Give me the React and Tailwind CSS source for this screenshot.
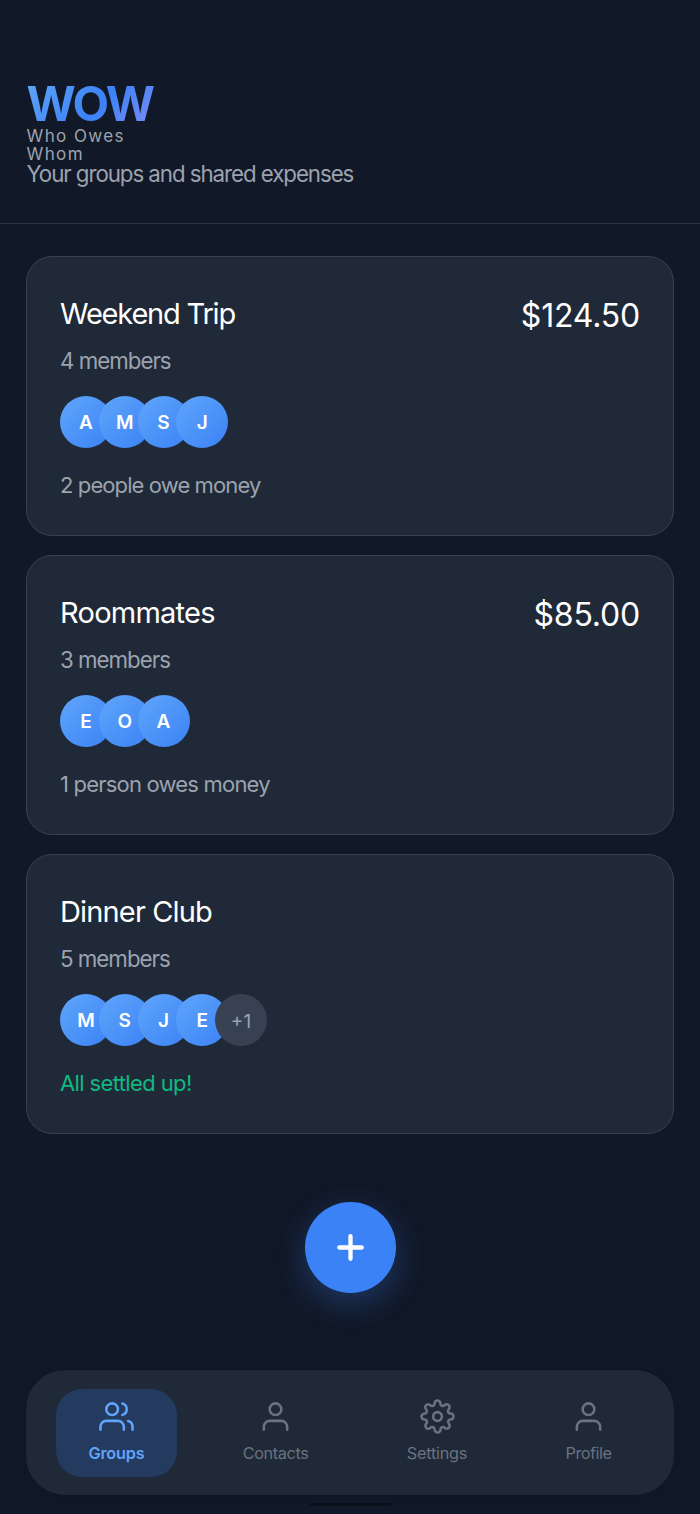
import React from "react";

const groups = [
  { name: "Weekend Trip", nameClass: "tracking-[-1.2px]", amount: "$124.50", members: "4 members", people: ["A", "M", "S", "J"], extra: null, status: "2 people owe money", statusClass: "tracking-[-0.9px] text-[#9ca3af]" },
  { name: "Roommates", nameClass: "tracking-[-0.75px]", amount: "$85.00", members: "3 members", people: ["E", "O", "A"], extra: null, status: "1 person owes money", statusClass: "tracking-[-0.8px] text-[#9ca3af]" },
  { name: "Dinner Club", nameClass: "tracking-[-0.85px]", amount: null, members: "5 members", people: ["M", "S", "J", "E"], extra: "+1", status: "All settled up!", statusClass: "tracking-[-0.62px] text-[#10b981]" },
];

function Icon({ children }) {
  return (
    <svg className="size-[35px] shrink-0" viewBox="0 0 24 24" fill="none" stroke="currentColor" strokeWidth="1.75" strokeLinecap="round" strokeLinejoin="round">
      {children}
    </svg>
  );
}

function UsersIcon() {
  return (
    <Icon>
      <path d="M17 21v-2a4 4 0 0 0-4-4H5a4 4 0 0 0-4 4v2" />
      <circle cx="9" cy="7" r="4" />
      <path d="M23 21v-2a4 4 0 0 0-3-3.87" />
      <path d="M16 3.13a4 4 0 0 1 0 7.75" />
    </Icon>
  );
}

function UserIcon() {
  return (
    <Icon>
      <path d="M20 21v-2a4 4 0 0 0-4-4H8a4 4 0 0 0-4 4v2" />
      <circle cx="12" cy="7" r="4" />
    </Icon>
  );
}

function SettingsIcon() {
  return (
    <Icon>
      <circle cx="12" cy="12" r="3" />
      <path d="M19.4 15a1.65 1.65 0 0 0 .33 1.82l.06.06a2 2 0 0 1-2.83 2.83l-.06-.06a1.65 1.65 0 0 0-1.82-.33 1.65 1.65 0 0 0-1 1.51V21a2 2 0 0 1-4 0v-.09A1.65 1.65 0 0 0 9 19.4a1.65 1.65 0 0 0-1.82.33l-.06.06a2 2 0 0 1-2.83-2.83l.06-.06a1.65 1.65 0 0 0 .33-1.82 1.65 1.65 0 0 0-1.51-1H3a2 2 0 0 1 0-4h.09A1.65 1.65 0 0 0 4.6 9a1.65 1.65 0 0 0-.33-1.82l-.06-.06a2 2 0 0 1 2.83-2.83l.06.06a1.65 1.65 0 0 0 1.82.33H9a1.65 1.65 0 0 0 1-1.51V3a2 2 0 0 1 4 0v.09a1.65 1.65 0 0 0 1 1.51 1.65 1.65 0 0 0 1.82-.33l.06-.06a2 2 0 0 1 2.83 2.83l-.06.06a1.65 1.65 0 0 0-.33 1.82V9a1.65 1.65 0 0 0 1.51 1H21a2 2 0 0 1 0 4h-.09a1.65 1.65 0 0 0-1.51 1z" />
    </Icon>
  );
}

function GroupCard({ group }) {
  return (
    <article className="flex h-[280px] flex-col rounded-[26px] border border-[#374151] bg-[#1f2937] px-[33px] pt-[39px]">
      <div className="flex h-9 items-center justify-between text-white">
        <h2 className={"text-[29px] leading-9 " + group.nameClass}>{group.name}</h2>
        {group.amount && <span className="pt-1 text-[32px] leading-9 tracking-[-0.2px]">{group.amount}</span>}
      </div>
      <p className="mt-[15px] text-[22.3px] leading-7 tracking-[-1px] text-[#9ca3af]">{group.members}</p>
      <div className="mt-[21px] flex">
        {group.people.map((p, i) => (
          <div key={i} className="-mr-[13.25px] flex size-[52px] shrink-0 items-center justify-center rounded-full bg-linear-135 from-[#60a5fa] to-[#3b82f6] pt-0.5 text-[19px] font-semibold text-white">
            {p}
          </div>
        ))}
        {group.extra && (
          <div className="flex size-[52px] items-center justify-center rounded-full bg-[#374151] pt-1 text-[19px] text-[#9ca3af]">{group.extra}</div>
        )}
      </div>
      <p className={"mt-[23px] text-[22px] leading-7 " + group.statusClass}>{group.status}</p>
    </article>
  );
}

export default function App() {
  return (
    <div className="flex h-[1514px] w-[700px] flex-col bg-[#111827] font-['Inter',sans-serif]">
      <header className="flex h-[224px] flex-col border-b-[1.5px] border-[#2a3443] px-[26.5px] pt-20">
        <h1 className="w-[130px] bg-[linear-gradient(135deg,#60a5fa_0%,#3b82f6_55%,#818cf8_100%)] bg-clip-text text-[47.5px] leading-[48px] font-bold tracking-[-2.2px] text-transparent">WOW</h1>
        <p className="w-[127px] text-[17px] leading-[17.5px] tracking-[1.4px] text-[#9ca3af]">Who Owes Whom</p>
        <p className="-mt-[3.5px] text-[22.3px] leading-7 tracking-[-1.06px] text-[#9ca3af]">Your groups and shared expenses</p>
      </header>
      <main className="flex flex-col gap-[19px] px-[26px] pt-8">
        {groups.map((g) => <GroupCard key={g.name} group={g} />)}
      </main>
      <div className="mt-[68px] flex justify-center">
        <button aria-label="Add" className="flex size-[91px] items-center justify-center rounded-full bg-[#3b82f6] text-white shadow-[0_10px_32px_rgba(59,130,246,0.3)]">
          <svg className="size-[45px]" viewBox="0 0 24 24" fill="none" stroke="currentColor" strokeWidth="2.3" strokeLinecap="round">
            <path d="M12 6v12M6 12h12" />
          </svg>
        </button>
      </div>
      <nav className="mx-[26px] mt-[77px] flex h-[125px] shrink-0 items-center justify-between rounded-[39px] bg-[#1f2937] px-[30px] text-[16.3px] leading-5 text-[#6b7280] shadow-[0_0_10px_rgba(0,0,0,0.12)]">
        <a className="flex h-[88px] w-[121px] flex-col items-center rounded-[26px] bg-[#243a5e] pt-[10.5px] font-semibold tracking-[-0.2px] text-[#60a5fa]">
          <UsersIcon /><span className="mt-[9px]">Groups</span>
        </a>
        <a className="flex h-[88px] w-[131px] flex-col items-center pt-[10.5px] tracking-[-0.4px]"><UserIcon /><span className="mt-[9px]">Contacts</span></a>
        <a className="flex h-[88px] w-[126px] flex-col items-center pt-[10.5px] tracking-[-0.25px]"><SettingsIcon /><span className="mt-[9px]">Settings</span></a>
        <a className="flex h-[88px] w-[111px] flex-col items-center pt-[10.5px] tracking-[-0.5px]"><UserIcon /><span className="mt-[9px]">Profile</span></a>
      </nav>
      <div className="mx-auto mt-2 h-[3px] w-[81px] rounded-full bg-[#0b0f19]" />
    </div>
  );
}
